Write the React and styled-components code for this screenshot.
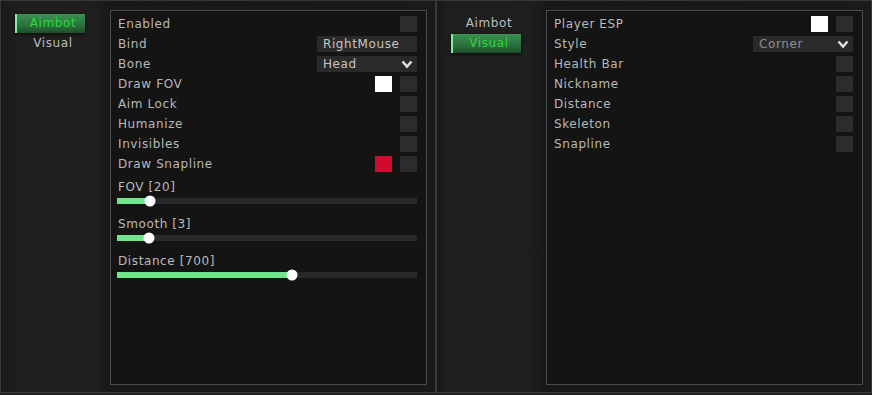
import React from "react";
import styled, { createGlobalStyle } from "styled-components";

const GlobalStyle = createGlobalStyle`
  html, body {
    margin: 0;
    padding: 0;
    background: #222222;
  }
  body {
    font-family: "DejaVu Sans", Verdana, sans-serif;
    font-size: 12px;
    letter-spacing: 0.6px;
    color: #bababa;
  }
`;

const Page = styled.div`
  display: flex;
  width: 872px;
  height: 395px;
`;

const Window = styled.div`
  flex: 1;
  height: 393px;
  box-sizing: border-box;
  border: 1px solid #383838;
  display: flex;
  background: linear-gradient(
    to right,
    #191919 0,
    #1e1e1e 12px,
    #1f1f1f 90px,
    #181818 108px,
    #1a1a1a 100%
  );
`;

const Sidebar = styled.div`
  width: 109px;
  flex-shrink: 0;
  padding-top: 13px;
  display: flex;
  flex-direction: column;
  gap: 1px;
`;

const Tab = styled.div`
  width: 70px;
  height: 19px;
  margin-left: 14px;
  box-sizing: border-box;
  line-height: 19px;
  text-align: center;
  padding-left: 4px;
  border-left: 2px solid ${(p) => (p.$active ? "#86eea0" : "transparent")};
  color: ${(p) => (p.$active ? "#2fd63a" : "#bdbdbd")};
  background: ${(p) =>
    p.$active
      ? "linear-gradient(to bottom, #3b9152 0%, #2c7440 55%, #1d4f2a 100%)"
      : "transparent"};
  box-shadow: ${(p) => (p.$active ? "0 1px 3px rgba(0,0,0,0.7)" : "none")};
`;

const Panel = styled.div`
  width: 317px;
  height: 375px;
  margin-top: 9px;
  box-sizing: border-box;
  border: 1px solid #4a4a4a;
  background: #141414;
  padding: 3px 9px 0 7px;
  display: flex;
  flex-direction: column;
`;

const Row = styled.div`
  height: 20px;
  display: flex;
  align-items: center;
  justify-content: space-between;
`;

const Label = styled.span`
  color: #b8b8b8;
`;

const Controls = styled.div`
  display: flex;
  align-items: center;
  gap: 8px;
`;

const CheckBox = styled.div`
  width: 17px;
  height: 16px;
  background: #2c2c2c;
`;

const Swatch = styled.div`
  width: 17px;
  height: 16px;
  background: ${(p) => p.$color};
`;

const Field = styled.div`
  width: 100px;
  height: 16px;
  box-sizing: border-box;
  background: #2a2a2a;
  padding: 0 4px 0 6px;
  line-height: 16px;
  color: ${(p) => (p.$dim ? "#8e8e8e" : "#c4c4c4")};
  display: flex;
  align-items: center;
  justify-content: space-between;
`;

const Chevron = () => (
  <svg width="12" height="9" viewBox="0 0 12 9">
    <polyline
      points="1.5,1.5 6,6.5 10.5,1.5"
      fill="none"
      stroke="#dcdcdc"
      strokeWidth="2.6"
    />
  </svg>
);

const Sliders = styled.div`
  padding-top: 5px;
  display: flex;
  flex-direction: column;
  gap: 12px;
`;

const SliderBlock = styled.div`
  display: flex;
  flex-direction: column;
  margin-left: -1px;
`;

const SliderLabel = styled.div`
  line-height: 16px;
  margin-bottom: 3px;
  padding-left: 1px;
`;

const Track = styled.div`
  position: relative;
  height: 6px;
  background: #292929;
`;

const Fill = styled.div`
  height: 100%;
  background: #6ee68c;
`;

const Knob = styled.div`
  position: absolute;
  top: 50%;
  width: 11px;
  height: 11px;
  border-radius: 50%;
  background: #ffffff;
  transform: translate(-50%, -50%);
`;

const Slider = ({ label, value, min, max }) => {
  const pct = ((value - min) / (max - min)) * 100;
  return (
    <SliderBlock>
      <SliderLabel>
        {label} [{value}]
      </SliderLabel>
      <Track>
        <Fill style={{ width: pct + "%" }} />
        <Knob style={{ left: pct + "%" }} />
      </Track>
    </SliderBlock>
  );
};

const Menu = ({ active, children }) => (
  <Window>
    <Sidebar>
      <Tab $active={active === "Aimbot"}>Aimbot</Tab>
      <Tab $active={active === "Visual"}>Visual</Tab>
    </Sidebar>
    <Panel>{children}</Panel>
  </Window>
);

const Check = ({ label, swatch }) => (
  <Row>
    <Label>{label}</Label>
    <Controls>
      {swatch && <Swatch $color={swatch} />}
      <CheckBox />
    </Controls>
  </Row>
);

const App = () => {
  return (
    <>
      <GlobalStyle />
      <Page>
        <Menu active="Aimbot">
          <Check label="Enabled" />
          <Row>
            <Label>Bind</Label>
            <Field>RightMouse</Field>
          </Row>
          <Row>
            <Label>Bone</Label>
            <Field>
              Head
              <Chevron />
            </Field>
          </Row>
          <Check label="Draw FOV" swatch="#ffffff" />
          <Check label="Aim Lock" />
          <Check label="Humanize" />
          <Check label="Invisibles" />
          <Check label="Draw Snapline" swatch="#d20a2c" />
          <Sliders>
            <Slider label="FOV" value={20} min={0} max={180} />
            <Slider label="Smooth" value={3} min={1} max={20} />
            <Slider label="Distance" value={700} min={0} max={1200} />
          </Sliders>
        </Menu>
        <Menu active="Visual">
          <Check label="Player ESP" swatch="#ffffff" />
          <Row>
            <Label>Style</Label>
            <Field $dim>
              Corner
              <Chevron />
            </Field>
          </Row>
          <Check label="Health Bar" />
          <Check label="Nickname" />
          <Check label="Distance" />
          <Check label="Skeleton" />
          <Check label="Snapline" />
        </Menu>
      </Page>
    </>
  );
};

export default App;
